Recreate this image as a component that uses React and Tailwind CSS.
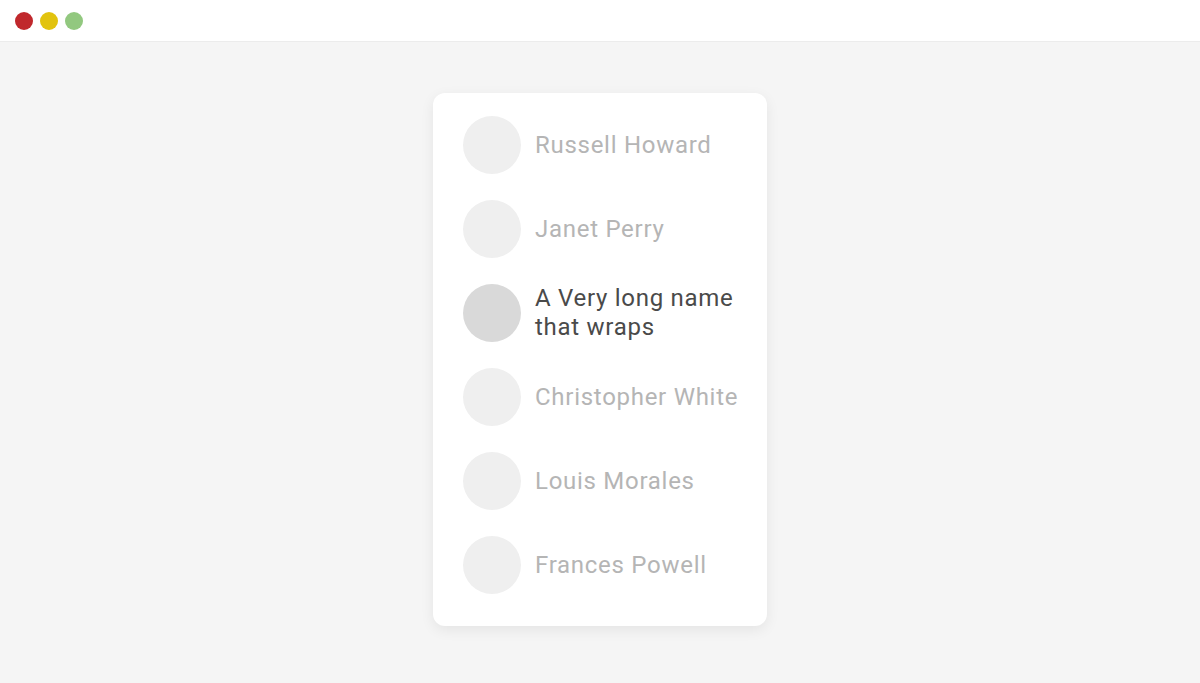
const people = [
  { name: "Russell Howard" },
  { name: "Janet Perry" },
  { name: "A Very long name that wraps", active: true },
  { name: "Christopher White" },
  { name: "Louis Morales" },
  { name: "Frances Powell" },
];

function Person({ name, active }) {
  return (
    <li className="flex items-center gap-[14px] min-h-[58px]">
      <div
        className={
          "w-[58px] h-[58px] shrink-0 rounded-full " +
          (active ? "bg-[#d9d9d9]" : "bg-[#efefef]")
        }
      />
      <span
        className={
          "text-[24px] leading-[29px] tracking-[0.03em] " +
          (active ? "text-[#4a4a4a]" : "text-[#b5b5b5]")
        }
      >
        {name}
      </span>
    </li>
  );
}

export default function App() {
  return (
    <div className="min-h-[683px] bg-[#f5f5f5] font-['Roboto',sans-serif]">
      <div className="h-[42px] bg-white border-b border-[#ececec] flex items-center gap-[7px] px-[15px]">
        <span className="w-[18px] h-[18px] rounded-full bg-[#c0282c]" />
        <span className="w-[18px] h-[18px] rounded-full bg-[#e2c30e]" />
        <span className="w-[18px] h-[18px] rounded-full bg-[#92c87f]" />
      </div>
      <div className="flex justify-center pt-[51px]">
        <ul className="w-[334px] bg-white rounded-[12px] shadow-[0_4px_14px_rgba(0,0,0,0.07)] pl-[30px] pr-[22px] pt-[23px] pb-[32px] flex flex-col gap-[26px]">
          {people.map((p) => (
            <Person key={p.name} {...p} />
          ))}
        </ul>
      </div>
    </div>
  );
}
